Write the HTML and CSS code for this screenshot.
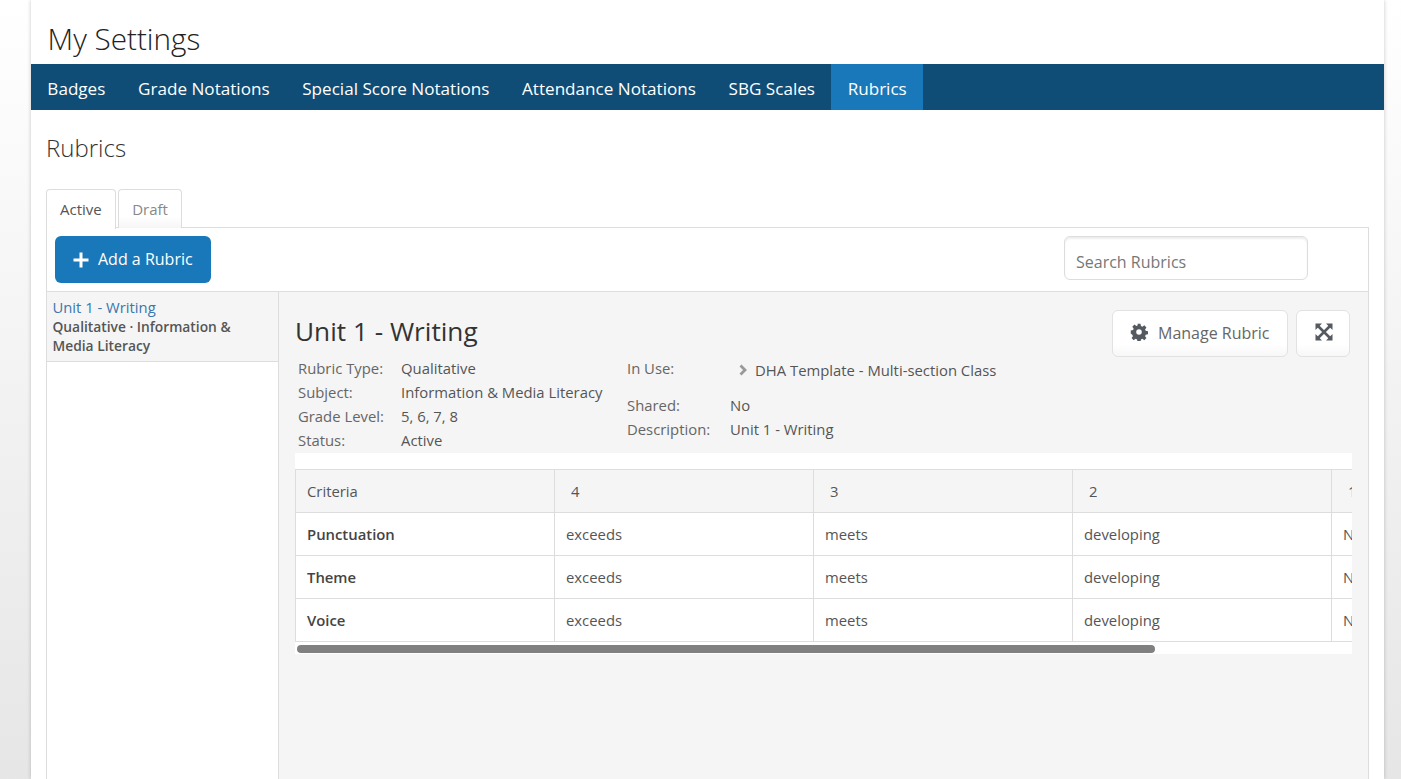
FILE: index.html
```html
<!DOCTYPE html>
<html lang="en">
<head>
<meta charset="utf-8">
<title>My Settings</title>
<link rel="stylesheet" href="styles.css">
</head>
<body>
<main class="page">
  <h1 class="page-title">My Settings</h1>
  <nav class="nav">
    <a class="nav-item">Badges</a>
    <a class="nav-item">Grade Notations</a>
    <a class="nav-item">Special Score Notations</a>
    <a class="nav-item">Attendance Notations</a>
    <a class="nav-item">SBG Scales</a>
    <a class="nav-item is-active">Rubrics</a>
  </nav>
  <section class="content">
    <h2 class="section-title">Rubrics</h2>
    <div class="tabs">
      <a class="tab is-active">Active</a>
      <a class="tab">Draft</a>
    </div>
    <div class="box">
      <div class="toolbar">
        <button class="btn-add">
          <svg class="plus" viewBox="0 0 16 16" width="16" height="16"><path d="M6.500 0.500h3v6h6v3h-6v6h-3v-6h-6v-3h6z" fill="#fff"/></svg>
          <span class="btn-label">Add a Rubric</span>
        </button>
        <input class="search" type="text" placeholder="Search Rubrics">
      </div>
      <div class="split">
        <aside class="list">
          <div class="list-item">
            <a class="list-link">Unit 1 - Writing</a>
            <div class="list-sub">Qualitative · Information &amp; Media Literacy</div>
          </div>
        </aside>
        <div class="detail">
          <div class="detail-head">
            <h3 class="detail-title">Unit 1 - Writing</h3>
            <div class="actions">
              <button class="btn-plain btn-manage">
                <svg class="gear" viewBox="0 0 24 24" width="18" height="18"><path fill="#555a60" fill-rule="evenodd" d="M10 1h4l.6 3.100 1.900.8 2.600-1.800 2.800 2.800-1.800 2.600.8 1.900 3.100.6v4l-3.100.6-.8 1.900 1.800 2.600-2.800 2.800-2.600-1.800-1.900.8-.6 3.100h-4l-.6-3.100-1.900-.8-2.600 1.800-2.800-2.800 1.800-2.600-.8-1.900L1 14v-4l3.100-.6.8-1.900-1.800-2.600 2.800-2.800 2.600 1.800 1.900-.8zM12 8.300a3.700 3.700 0 1 0 0 7.400 3.700 3.700 0 0 0 0-7.400z"/></svg>
                <span class="btn-label">Manage Rubric</span>
              </button>
              <button class="btn-plain btn-expand">
                <svg viewBox="0 0 18 18" width="18" height="18"><path d="M3 3 15 15M15 3 3 15" stroke="#555a60" stroke-width="2.600" fill="none"/><g fill="#555a60"><path d="M0.500 0.500h6.500L0.500 7z"/><path d="M17.500 0.500V7L11 0.500z"/><path d="M0.500 17.500V11L7 17.500z"/><path d="M17.500 17.500H11L17.500 11z"/></g></svg>
              </button>
            </div>
          </div>
          <div class="meta">
            <dl class="meta-left">
              <dt>Rubric Type:</dt><dd>Qualitative</dd>
              <dt>Subject:</dt><dd>Information &amp; Media Literacy</dd>
              <dt>Grade Level:</dt><dd>5, 6, 7, 8</dd>
              <dt>Status:</dt><dd>Active</dd>
            </dl>
            <dl class="meta-right">
              <dt class="use-label">In Use:</dt>
              <dd class="use-value">
                <svg class="chev" viewBox="0 0 8 12" width="8" height="12"><path d="M1.500 1.500 6 6l-4.500 4.500" fill="none" stroke="#999" stroke-width="2.800"/></svg>
                <span>DHA Template - Multi-section Class</span>
              </dd>
              <dt>Shared:</dt><dd>No</dd>
              <dt>Description:</dt><dd>Unit 1 - Writing</dd>
            </dl>
          </div>
          <div class="scroller">
            <div class="table-clip">
              <table class="grid">
                <thead>
                  <tr><th>Criteria</th><th class="num">4</th><th class="num">3</th><th class="num">2</th><th class="num">1</th></tr>
                </thead>
                <tbody>
                  <tr><td class="crit">Punctuation</td><td>exceeds</td><td>meets</td><td>developing</td><td>Not yet</td></tr>
                  <tr><td class="crit">Theme</td><td>exceeds</td><td>meets</td><td>developing</td><td>Not yet</td></tr>
                  <tr><td class="crit">Voice</td><td>exceeds</td><td>meets</td><td>developing</td><td>Not yet</td></tr>
                </tbody>
              </table>
            </div>
            <div class="thumb"></div>
          </div>
        </div>
      </div>
    </div>
  </section>
</main>
</body>
</html>
```

FILE: styles.css
```css
* { box-sizing: border-box; }
html, body { height: 100%; }
body {
  margin: 0;
  padding: 0 17px 0 31px;
  height: 779px;
  overflow: hidden;
  font-family: "Open Sans", sans-serif;
  font-size: 14px;
  color: #444;
  background: linear-gradient(#fff 0, #e6e6e6 100%);
}
.page {
  height: 779px;
  background: #fff;
  box-shadow: 0 0 4px rgba(0,0,0,.22);
  display: flex;
  flex-direction: column;
}
.page-title {
  margin: 0;
  height: 64px;
  padding: 18px 0 0 16.500px;
  font-size: 29.700px;
  line-height: 41px;
  font-weight: 300;
  color: #222;
}
.nav { display: flex; height: 46px; background: #0f4d76; }
.nav-item {
  padding: 0 16.350px;
  font-size: 17.100px;
  line-height: 50px;
  color: #fff;
  white-space: nowrap;
}
.nav-item.is-active { background: #1878b9; }
.content { flex: 1; padding: 0 15px; min-height: 0; display: flex; flex-direction: column; }
.section-title {
  margin: 0;
  height: 79px;
  padding-top: 20px;
  font-size: 24px;
  line-height: 35px;
  font-weight: 300;
  color: #333;
}
.tabs { display: flex; gap: 2px; height: 39px; position: relative; z-index: 1; }
.tab {
  height: 39px;
  padding: 0 13.500px;
  border: 1px solid #ddd;
  border-bottom: 0;
  border-radius: 4px 4px 0 0;
  font-size: 15px;
  line-height: 38px;
  color: #888;
  background: linear-gradient(#fff 70%, #f6f6f6);
}
.tab.is-active { padding: 0 13px; color: #555; background: #fff; height: 40px; }
.box {
  flex: 1;
  min-height: 0;
  margin-top: -1px;
  border: 1px solid #ddd;
  border-bottom: 0;
  display: flex;
  flex-direction: column;
}
.toolbar {
  height: 64px;
  flex: none;
  border-bottom: 1px solid #ddd;
  padding: 8px 60px 0 8px;
  display: flex;
  justify-content: space-between;
  align-items: flex-start;
}
.btn-add {
  width: 156px;
  height: 47px;
  border: 0;
  border-radius: 6px;
  background: #1878b9;
  color: #fff;
  font: 16px "Open Sans", sans-serif;
  display: flex;
  align-items: center;
  gap: 9px;
  padding: 0 0 0 18px;
  white-space: nowrap;
}
.btn-label { position: relative; top: -1px; }
.search {
  width: 244px;
  height: 44px;
  border: 1px solid #ddd;
  border-radius: 6px;
  box-shadow: inset 0 2px 2px #eee;
  padding: 8px 11px 0;
  font: 16px "Open Sans", sans-serif;
  color: #666;
  outline: 0;
}
.search::placeholder { color: #777; opacity: 1; }
.split { flex: 1; min-height: 0; display: flex; }
.list { width: 232px; flex: none; border-right: 1px solid #ddd; }
.list-item {
  height: 70px;
  padding: 6px 5.500px 0;
  background: #f5f5f5;
  border-bottom: 1px solid #ddd;
  line-height: 19px;
}
.list-link { display: block; font-size: 14.800px; color: #3a77ad; }
.list-sub { font-size: 13.800px; font-weight: 600; color: #555; }
.detail { flex: 1; min-width: 0; background: #f5f5f5; padding: 18px 16px 0; }
.detail-head { display: flex; justify-content: space-between; align-items: flex-start; height: 46px; padding-right: 2px; }
.detail-title {
  margin: 0;
  padding-top: 3px;
  font-size: 26.200px;
  line-height: 36px;
  font-weight: 400;
  color: #333;
}
.actions { display: flex; gap: 8px; }
.btn-plain {
  height: 47px;
  border: 1px solid #e2e2e2;
  border-radius: 6px;
  background: linear-gradient(#fff 75%, #f7f7f7);
  font: 16px "Open Sans", sans-serif;
  color: #666;
  display: flex;
  align-items: center;
}
.btn-plain svg { margin-top: -3px; }
.btn-manage { width: 176px; padding: 0 0 0 17px; gap: 10px; white-space: nowrap; }
.btn-expand { width: 54px; justify-content: center; padding: 0 0 0 1px; }
.meta { display: flex; height: 98px; padding-left: 3px; font-size: 14.850px; line-height: 24px; }
.meta dl { margin: 0; display: grid; align-content: start; }
.meta dt { color: #666; }
.meta dd { margin: 0; color: #555; white-space: nowrap; }
.meta-left { grid-template-columns: 103px auto; width: 329px; }
.meta-right { grid-template-columns: 103px auto; }
.use-label { height: 37px; }
.use-value { display: flex; align-items: flex-start; padding: 2px 0 0 9px; gap: 8px; }
.chev { margin-top: 6px; }
.scroller {
  width: 1057px;
  height: 201px;
  background: #fff;
  padding-top: 16px;
  position: relative;
  margin-top: -1px;
}
.table-clip { overflow: hidden; }
.grid {
  border-collapse: collapse;
  table-layout: fixed;
  width: 1296px;
  font-size: 14.850px;
  color: #555;
}
.grid th, .grid td {
  height: 43px;
  padding: 0 11px;
  border: 1px solid #ddd;
  text-align: left;
  font-weight: 400;
  white-space: nowrap;
}
.grid th { background: #f5f5f5; }
.grid th.num { padding-left: 16px; }
.grid .crit { font-weight: 600; color: #444; }
.thumb {
  position: absolute;
  left: 2px;
  top: 192px;
  width: 858px;
  height: 8px;
  border-radius: 4px;
  background: #808080;
}
```
